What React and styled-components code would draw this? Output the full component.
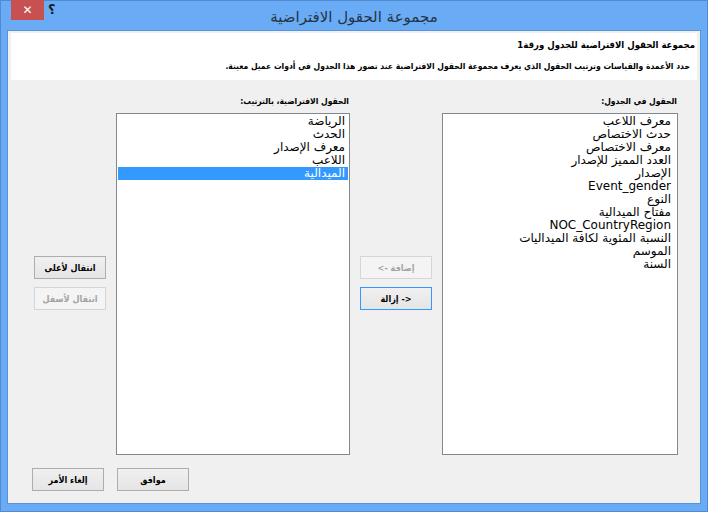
import React from 'react'
import styled, { createGlobalStyle } from 'styled-components'

const GlobalStyle = createGlobalStyle`
  html, body {
    margin: 0;
    padding: 0;
    background: #ffffff;
  }
  body {
    font-family: "DejaVu Sans", "Noto Sans", sans-serif;
  }
`

const small = `"DejaVu Sans Condensed", "DejaVu Sans", sans-serif`

const Frame = styled.div`
  width: 708px;
  height: 512px;
  box-sizing: border-box;
  background: #6aabf5;
  border: 1px solid #4f8ad2;
  display: flex;
  flex-direction: column;
  padding: 0 6px 7px 6px;
`

const TitleBar = styled.div`
  height: 29px;
  position: relative;
  display: flex;
  align-items: center;
  justify-content: center;
`

const Title = styled.div`
  font-family: "DejaVu Sans", sans-serif;
  font-size: 15px;
  color: #263444;
  margin-top: 2px;
`

const CloseButton = styled.div`
  position: absolute;
  left: 4px;
  top: -1px;
  width: 33px;
  height: 20px;
  background: #c75050;
  color: #ffffff;
  display: flex;
  align-items: center;
  justify-content: center;
  font-size: 12px;
  font-weight: bold;
`

const HelpButton = styled.div`
  position: absolute;
  left: 41px;
  top: 1px;
  font-size: 13px;
  font-weight: bold;
  color: #1c1c1c;
`

const Client = styled.div`
  flex: 1;
  background: #f0f0f0;
  border: 1px solid #5a93d8;
  display: flex;
  flex-direction: column;
  padding: 2px 3px 0 3px;
  direction: rtl;
`

const Header = styled.div`
  height: 47px;
  background: #ffffff;
  box-sizing: border-box;
  padding: 4px 2px 0 0;
`

const HeaderTitle = styled.div`
  font-family: ${small};
  font-size: 9.5px;
  font-weight: bold;
  color: #000;
  line-height: 16px;
`

const HeaderDesc = styled.div`
  font-family: ${small};
  font-size: 8.5px;
  font-weight: bold;
  color: #000;
  margin-top: 6px;
  padding-right: 5px;
  line-height: 14px;
`

const Body = styled.div`
  display: grid;
  grid-template-columns: 236px 72px 234px 72px;
  grid-template-rows: 19px 342px;
  column-gap: 10px;
  margin-top: 14px;
  padding: 0 19px 0 23px;
`

const Label = styled.div`
  font-family: ${small};
  font-size: 8.5px;
  font-weight: bold;
  color: #000;
  padding-right: 1px;
  line-height: 14px;
`

const ListBox = styled.div`
  background: #ffffff;
  border: 1px solid #828790;
  padding: 1px;
  box-sizing: border-box;
  overflow: hidden;
`

const Item = styled.div`
  height: 13px;
  line-height: 13px;
  font-size: 12px;
  padding-right: ${({ pad }) => pad || 4}px;
  color: ${({ selected }) => (selected ? '#ffffff' : '#000000')};
  background: ${({ selected }) => (selected ? '#3399ff' : 'transparent')};
  white-space: nowrap;
`

const ButtonStack = styled.div`
  align-self: center;
  display: flex;
  flex-direction: column;
  gap: 8px;
  margin-top: -2px;
`

const Button = styled.div`
  width: 72px;
  height: 23px;
  box-sizing: border-box;
  border: 1px solid ${({ disabled, focused }) => (focused ? '#3399ff' : disabled ? '#d5d5d5' : '#adadad')};
  background: ${({ disabled }) => (disabled ? '#f4f4f4' : 'linear-gradient(#f0f0f0, #e5e5e5)')};
  color: ${({ disabled }) => (disabled ? '#a3a3a3' : '#000000')};
  font-family: ${small};
  font-size: 9px;
  font-weight: bold;
  display: flex;
  align-items: center;
  justify-content: center;
`

const Footer = styled.div`
  display: flex;
  justify-content: flex-end;
  gap: 13px;
  margin-top: 13px;
  padding-left: 21px;
`

const tableFields = [
  'معرف اللاعب',
  'حدث الاختصاص',
  'معرف الاختصاص',
  'العدد المميز للإصدار',
  'الإصدار',
  'Event_gender',
  'النوع',
  'مفتاح الميدالية',
  'NOC_CountryRegion',
  'النسبة المئوية لكافة الميداليات',
  'الموسم',
  'السنة',
]

const defaultFields = ['الرياضة', 'الحدث', 'معرف الإصدار', 'اللاعب', 'الميدالية']

export default function App() {
  return (
    <>
      <GlobalStyle />
      <Frame>
        <TitleBar>
          <CloseButton>✕</CloseButton>
          <HelpButton>؟</HelpButton>
          <Title>مجموعة الحقول الافتراضية</Title>
        </TitleBar>
        <Client>
          <Header>
            <HeaderTitle>مجموعة الحقول الافتراضية للجدول ورقة1</HeaderTitle>
            <HeaderDesc>
              حدد الأعمدة والقياسات وترتيب الحقول الذي يعرف مجموعة الحقول الافتراضية عند تصور هذا الجدول في أدوات عميل معينة.
            </HeaderDesc>
          </Header>
          <Body>
            <Label>الحقول في الجدول:</Label>
            <div />
            <Label>الحقول الافتراضية، بالترتيب:</Label>
            <div />
            <ListBox>
              {tableFields.map((f) => (
                <Item key={f} pad={5}>{f}</Item>
              ))}
            </ListBox>
            <ButtonStack>
              <Button disabled>إضافة -&gt;</Button>
              <Button focused>&lt;- إزالة</Button>
            </ButtonStack>
            <ListBox>
              {defaultFields.map((f, i) => (
                <Item key={f} pad={3} selected={i === 4}>{f}</Item>
              ))}
            </ListBox>
            <ButtonStack>
              <Button>انتقال لأعلى</Button>
              <Button disabled>انتقال لأسفل</Button>
            </ButtonStack>
          </Body>
          <Footer>
            <Button>موافق</Button>
            <Button>إلغاء الأمر</Button>
          </Footer>
        </Client>
      </Frame>
    </>
  )
}
